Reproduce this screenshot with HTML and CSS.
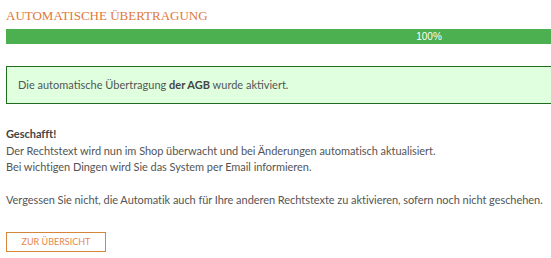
FILE: index.html
```html
<!DOCTYPE html>
<html lang="de">
<head>
<meta charset="utf-8">
<title>Automatische Übertragung</title>
<link rel="stylesheet" href="styles.css">
</head>
<body>
<div class="page">
  <h1 class="title">Automatische Übertragung</h1>
  <div class="progress"><div class="progress-bar" style="width:100%">100%</div></div>
  <div class="alert">Die automatische Übertragung <strong>der AGB</strong> wurde aktiviert.</div>
  <div class="content">
    <p><strong>Geschafft!</strong><br>
    Der Rechtstext wird nun im Shop überwacht und bei Änderungen automatisch aktualisiert.<br>
    Bei wichtigen Dingen wird Sie das System per Email informieren.</p>
    <p>Vergessen Sie nicht, die Automatik auch für Ihre anderen Rechtstexte zu aktivieren, sofern noch nicht geschehen.</p>
  </div>
  <a class="btn" href="#">Zur Übersicht</a>
</div>
</body>
</html>
```
FILE: styles.css
```css
html, body {
  margin: 0;
  padding: 0;
  background: #fff;
}
body {
  overflow: hidden;
}
.page {
  width: 846px;
  padding: 0 6px;
  font-family: "Lato", "Open Sans", sans-serif;
  font-size: 11px;
  color: #555;
}
.title {
  margin: 0;
  padding-top: 8px;
  height: 21px;
  font-family: "Liberation Serif", serif;
  font-weight: normal;
  font-size: 13px;
  line-height: 15px;
  text-transform: uppercase;
  color: #e0783a;
}
.progress {
  height: 15px;
  background: #eee;
}
.progress-bar {
  height: 15px;
  background: #4caf50;
  color: #fff;
  text-align: center;
  font-family: "Liberation Sans", sans-serif;
  font-size: 10px;
  line-height: 15px;
}
.alert {
  margin-top: 22px;
  box-sizing: border-box;
  height: 38px;
  border: 1px solid #1e6e1e;
  background: #dfffdf;
  padding: 0 11px;
  line-height: 36px;
  color: #555;
}
.alert strong {
  color: #444;
}
.content {
  margin-top: 22px;
  line-height: 16.5px;
  letter-spacing: -0.05px;
}
.content p {
  margin: 0 0 16.5px 0;
}
.content strong {
  color: #444;
}
.btn {
  display: flex;
  align-items: center;
  justify-content: center;
  box-sizing: border-box;
  margin-top: 23px;
  width: 100px;
  height: 20px;
  border: 1px solid #d4873a;
  color: #e8864a;
  font-size: 9px;
  text-transform: uppercase;
  text-decoration: none;
}
```
